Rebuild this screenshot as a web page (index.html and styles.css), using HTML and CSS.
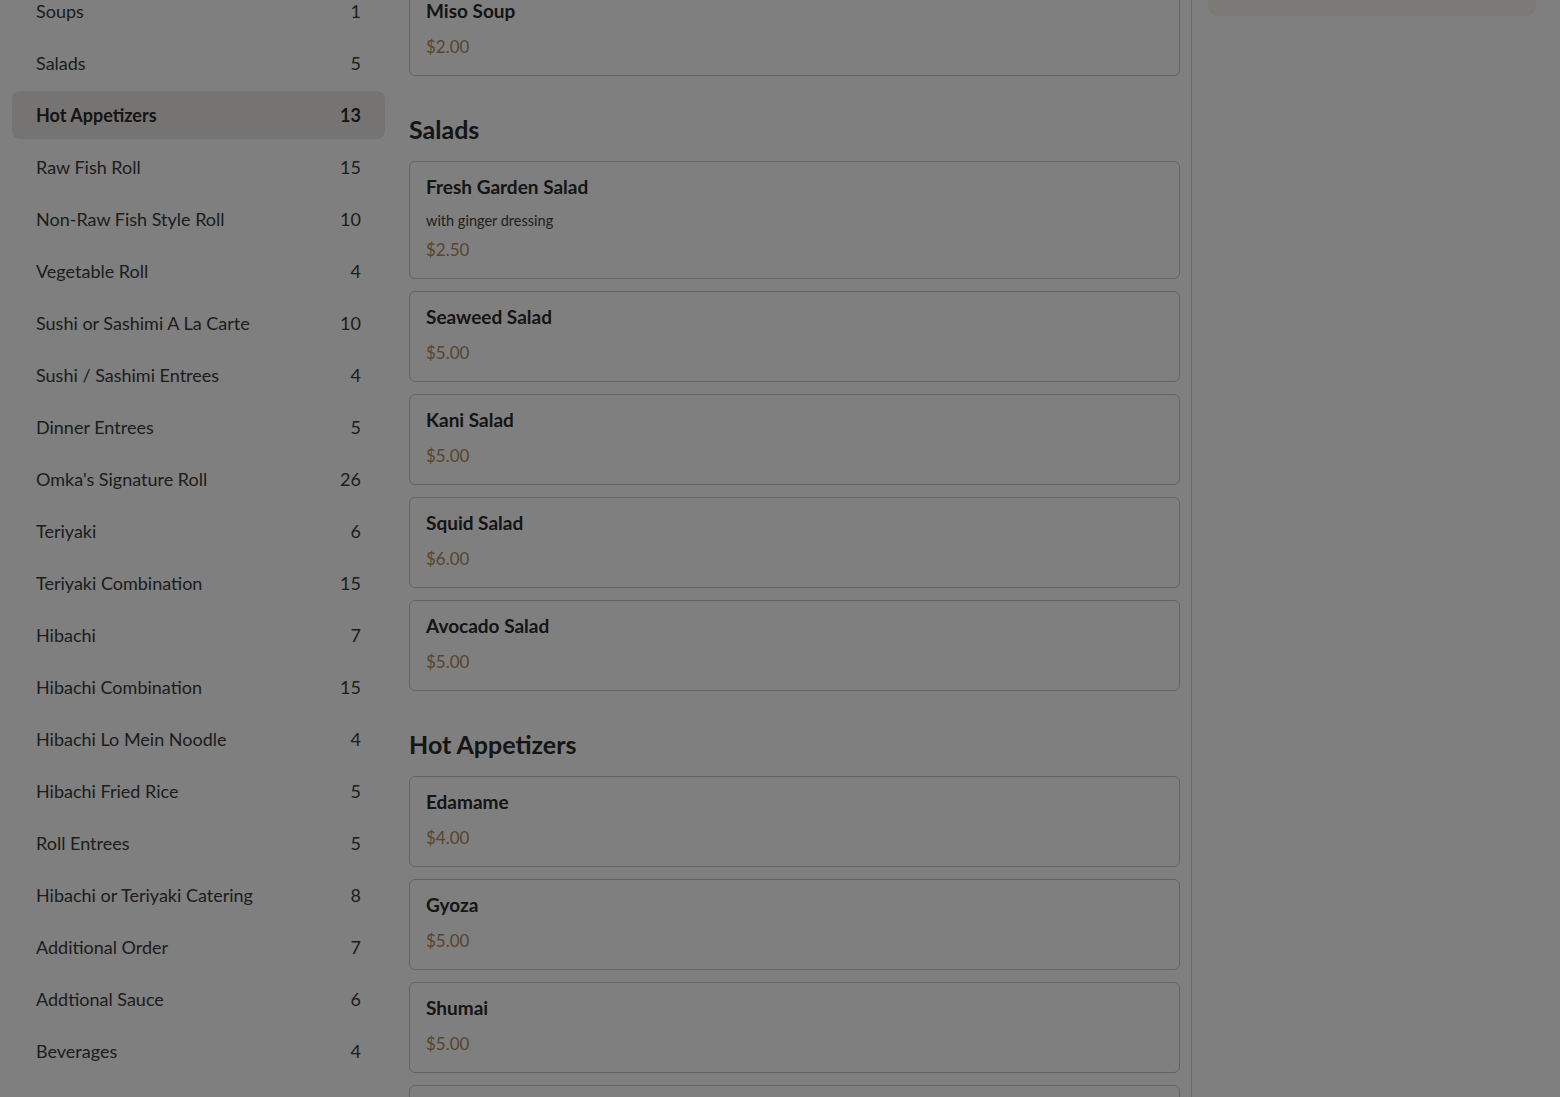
FILE: index.html
```html
<!DOCTYPE html>
<html>
<head>
<meta charset="utf-8">
<link rel="stylesheet" href="styles.css">
</head>
<body>
<div class="layout">
  <aside class="sidebar">
    <ul class="cats">
      <li class="cat"><span>Soups</span><span>1</span></li>
      <li class="cat"><span>Salads</span><span>5</span></li>
      <li class="cat active"><span>Hot Appetizers</span><span>13</span></li>
      <li class="cat"><span>Raw Fish Roll</span><span>15</span></li>
      <li class="cat"><span>Non-Raw Fish Style Roll</span><span>10</span></li>
      <li class="cat"><span>Vegetable Roll</span><span>4</span></li>
      <li class="cat"><span>Sushi or Sashimi A La Carte</span><span>10</span></li>
      <li class="cat"><span>Sushi / Sashimi Entrees</span><span>4</span></li>
      <li class="cat"><span>Dinner Entrees</span><span>5</span></li>
      <li class="cat"><span>Omka's Signature Roll</span><span>26</span></li>
      <li class="cat"><span>Teriyaki</span><span>6</span></li>
      <li class="cat"><span>Teriyaki Combination</span><span>15</span></li>
      <li class="cat"><span>Hibachi</span><span>7</span></li>
      <li class="cat"><span>Hibachi Combination</span><span>15</span></li>
      <li class="cat"><span>Hibachi Lo Mein Noodle</span><span>4</span></li>
      <li class="cat"><span>Hibachi Fried Rice</span><span>5</span></li>
      <li class="cat"><span>Roll Entrees</span><span>5</span></li>
      <li class="cat"><span>Hibachi or Teriyaki Catering</span><span>8</span></li>
      <li class="cat"><span>Additional Order</span><span>7</span></li>
      <li class="cat"><span>Addtional Sauce</span><span>6</span></li>
      <li class="cat"><span>Beverages</span><span>4</span></li>
    </ul>
  </aside>
  <main class="menu">
    <section class="section first">
      <h2 class="section-title">Soups</h2>
      <div class="items">
        <div class="item"><div class="item-name">Miso Soup</div><div class="item-price">$2.00</div></div>
      </div>
    </section>
    <section class="section">
      <h2 class="section-title">Salads</h2>
      <div class="items">
        <div class="item"><div class="item-name">Fresh Garden Salad</div><div class="item-desc">with ginger dressing</div><div class="item-price">$2.50</div></div>
        <div class="item"><div class="item-name">Seaweed Salad</div><div class="item-price">$5.00</div></div>
        <div class="item"><div class="item-name">Kani Salad</div><div class="item-price">$5.00</div></div>
        <div class="item"><div class="item-name">Squid Salad</div><div class="item-price">$6.00</div></div>
        <div class="item"><div class="item-name">Avocado Salad</div><div class="item-price">$5.00</div></div>
      </div>
    </section>
    <section class="section">
      <h2 class="section-title">Hot Appetizers</h2>
      <div class="items">
        <div class="item"><div class="item-name">Edamame</div><div class="item-price">$4.00</div></div>
        <div class="item"><div class="item-name">Gyoza</div><div class="item-price">$5.00</div></div>
        <div class="item"><div class="item-name">Shumai</div><div class="item-price">$5.00</div></div>
        <div class="item"><div class="item-name">Spring Roll</div><div class="item-price">$4.00</div></div>
      </div>
    </section>
  </main>
  <aside class="cart">
    <div class="cart-box"></div>
  </aside>
</div>
<div class="backdrop"></div>
</body>
</html>
```
FILE: styles.css
```css
* { box-sizing: border-box; }
html, body { margin: 0; padding: 0; height: 100%; overflow: hidden; }
body {
  background: #ffffff;
  color: #333333;
  font-family: Lato, "Noto Sans", "Liberation Sans", sans-serif;
}
.layout {
  display: flex;
  align-items: flex-start;
  margin-top: -63px;
}
.sidebar {
  width: 397px;
  flex: none;
  padding: 50px 12px 0;
}
.cats { list-style: none; margin: 0; padding: 0; }
.cat {
  display: flex;
  justify-content: space-between;
  align-items: center;
  height: 48px;
  padding: 0 24px;
  margin-bottom: 4px;
  border-radius: 8px;
  font-size: 18px;
  color: #3a3a3a;
}
.cat.active {
  background: #ebe9e4;
  font-weight: 700;
  color: #2a2a2a;
}
.menu {
  width: 782px;
  flex: none;
  margin-left: 12px;
  padding-right: 11px;
}
.section { margin-top: 37px; }
.section.first { margin-top: 0; }
.section-title {
  margin: 0 0 16px;
  font-size: 25px;
  line-height: 32px;
  font-weight: 700;
  color: #2a2a2a;
}
.items { display: flex; flex-direction: column; gap: 12px; }
.item {
  border: 1px solid #c8c8c8;
  border-radius: 6px;
  padding: 13px 16px 17px;
  background: #ffffff;
}
.item-name {
  font-size: 19px;
  line-height: 24px;
  font-weight: 700;
  color: #2a2a2a;
  margin-bottom: 13px;
}
.item-desc {
  font-size: 14.5px;
  line-height: 20px;
  color: #404040;
  margin: -1px 0 8px;
}
.item-price {
  font-size: 17px;
  line-height: 22px;
  color: #b08a58;
}
.cart {
  flex: 1;
  align-self: stretch;
  min-height: 1200px;
  border-left: 1px solid #d2d2d2;
  padding: 0 24px 0 16px;
}
.cart-box {
  height: 79px;
  border-radius: 10px;
  background: #f6f4ef;
}
.backdrop {
  position: fixed;
  inset: 0;
  background: rgba(0, 0, 0, 0.5);
}
```
